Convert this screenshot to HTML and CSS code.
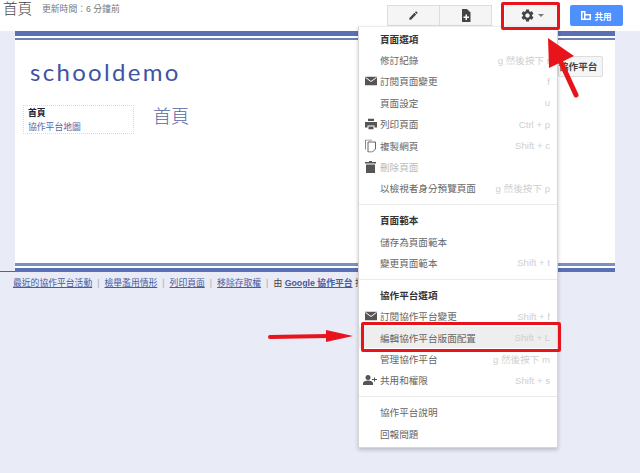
FILE: index.html
```html
<!DOCTYPE html>
<html lang="zh-Hant">
<head>
    <meta charset="UTF-8">
    <meta name="viewport" content="width=device-width, initial-scale=1.0">
    <title>首頁 - schooldemo</title>
    <link rel="stylesheet" href="styles.css">
</head>
<body>
    <!-- Barra superior -->
    <div class="topbar">
        <span class="page-title">首頁</span>
        <span class="updated">更新時間：6 分鐘前</span>
        <div class="tool-group">
            <div class="tool-btn">
                <svg width="11" height="11" viewBox="0 0 24 24"><path fill="#444" d="M3 17.25V21h3.75L17.81 9.94l-3.75-3.75L3 17.25zM20.71 7.04a1 1 0 0 0 0-1.41l-2.34-2.34a1 1 0 0 0-1.41 0l-1.83 1.83 3.75 3.75 1.83-1.83z"/></svg>
            </div>
            <div class="tool-btn">
                <svg width="12" height="13" viewBox="0 0 12 13"><path fill="#444" d="M2 0h5l3.5 3.5V13H2z"/><path fill="#fff" d="M5.5 5.5H7v2h2V9H7v2H5.5V9h-2V7.5h2z"/></svg>
            </div>
        </div>
        <div class="gear-btn">
            <svg width="15" height="15" viewBox="0 0 24 24"><path fill="#444" d="M19.14 12.94c.04-.3.06-.61.06-.94 0-.32-.02-.64-.07-.94l2.03-1.58c.18-.14.23-.41.12-.61l-1.92-3.32c-.12-.22-.37-.29-.59-.22l-2.39.96c-.5-.38-1.03-.7-1.62-.94l-.36-2.54c-.04-.24-.24-.41-.48-.41h-3.84c-.24 0-.43.17-.47.41l-.36 2.54c-.59.24-1.13.57-1.62.94l-2.39-.96c-.22-.08-.47 0-.59.22L2.74 8.87c-.12.21-.08.47.12.61l2.03 1.58c-.05.3-.09.63-.09.94s.02.64.07.94l-2.03 1.58c-.18.14-.23.41-.12.61l1.92 3.32c.12.22.37.29.59.22l2.39-.96c.5.38 1.03.7 1.62.94l.36 2.54c.05.24.24.41.48.41h3.84c.24 0 .44-.17.47-.41l.36-2.54c.59-.24 1.13-.56 1.62-.94l2.39.96c.22.08.47 0 .59-.22l1.92-3.32c.12-.22.07-.47-.12-.61l-2.01-1.58zM12 15.6c-1.98 0-3.6-1.62-3.6-3.6s1.62-3.6 3.6-3.6 3.6 1.62 3.6 3.6-1.62 3.6-3.6 3.6z"/></svg>
            <span class="caret"></span>
        </div>
        <div class="share-btn">
            <svg width="10" height="9" viewBox="0 0 10 9"><path fill="#fff" d="M0 0h4.5v3H10v6H0z"/><path fill="#4d90fe" d="M1.5 1.5H3v6H1.500zM4.500 4.500h4v3h-4z"/></svg>
            共用
        </div>
    </div>

    <!-- Pagina do site -->
    <div class="site">
        <div class="site-rule-top"></div>
        <div class="site-head">
            <div class="site-name">schooldemo</div>
            <div class="site-btn">協作平台</div>
        </div>
        <div class="site-body">
            <div class="side-nav">
                <div class="nav-current">首頁</div>
                <a class="nav-link" href="#">協作平台地圖</a>
            </div>
            <h1 class="content-title">首頁</h1>
        </div>
        <div class="site-rule-bottom"></div>
    </div>
    <div class="page-line"></div>

    <div class="footer">
        <a href="#">最近的協作平台活動</a><i>|</i><a href="#">檢舉濫用情形</a><i>|</i><a href="#">列印頁面</a><i>|</i><a href="#">移除存取權</a><i>|</i><span>由 <a class="strong" href="#">Google 協作平台</a> 技術提供</span>
    </div>

    <!-- Menu aberto -->
    <div class="menu">
        <div class="row head"><span>頁面選項</span></div>
        <div class="row"><span>修訂紀錄</span><kbd>g 然後按下 r</kbd></div>
        <div class="row">
            <svg class="icon" width="12" height="9" viewBox="0 0 12 9"><path fill="#555" d="M0 0h12v9H0z"/><path fill="none" stroke="#fff" stroke-width="1" d="M.5 1 6 5l5.5-4"/></svg>
            <span>訂閱頁面變更</span><kbd>f</kbd>
        </div>
        <div class="row"><span>頁面設定</span><kbd>u</kbd></div>
        <div class="row">
            <svg class="icon" width="12" height="11" viewBox="0 0 12 11"><path fill="#555" d="M3 0h6v2.5H3zM0 3.500h12V9H9.500V7h-7v2H0zM3.500 8h5v3h-5z"/></svg>
            <span>列印頁面</span><kbd>Ctrl + p</kbd>
        </div>
        <div class="row">
            <svg class="icon" width="11" height="13" viewBox="0 0 11 13"><path fill="none" stroke="#888" d="M.5 10V.5H7"/><path fill="none" stroke="#666" d="M3 2.5h7.500v7l-3 3H3z"/></svg>
            <span>複製網頁</span><kbd>Shift + c</kbd>
        </div>
        <div class="row disabled">
            <svg class="icon" width="11" height="12" viewBox="0 0 11 12"><path fill="#555" d="M4 0h3v1h4v1.500H0V1h4zM1 3.500h9V12H1z"/></svg>
            <span>刪除頁面</span>
        </div>
        <div class="row"><span>以檢視者身分預覽頁面</span><kbd>g 然後按下 p</kbd></div>
        <div class="sep"></div>
        <div class="row head"><span>頁面範本</span></div>
        <div class="row"><span>儲存為頁面範本</span></div>
        <div class="row"><span>變更頁面範本</span><kbd>Shift + t</kbd></div>
        <div class="sep"></div>
        <div class="row head"><span>協作平台選項</span></div>
        <div class="row">
            <svg class="icon" width="12" height="9" viewBox="0 0 12 9"><path fill="#555" d="M0 0h12v9H0z"/><path fill="none" stroke="#fff" stroke-width="1" d="M.5 1 6 5l5.5-4"/></svg>
            <span>訂閱協作平台變更</span><kbd>Shift + f</kbd>
        </div>
        <div class="row active"><span>編輯協作平台版面配置</span><kbd>Shift + L</kbd></div>
        <div class="row"><span>管理協作平台</span><kbd>g 然後按下 m</kbd></div>
        <div class="row">
            <svg class="icon wide" width="14" height="10" viewBox="0 0 14 10"><circle cx="5" cy="2.5" r="2.5" fill="#555"/><path fill="#555" d="M0 10V8c0-1.500 2.500-2.500 5-2.500S10 6.500 10 8v2z"/><path fill="#555" d="M11 2.500h1V4h2v1h-2v1.500h-1V5H9V4h2z"/></svg>
            <span>共用和權限</span><kbd>Shift + s</kbd>
        </div>
        <div class="sep"></div>
        <div class="row"><span>協作平台說明</span></div>
        <div class="row"><span>回報問題</span></div>
    </div>

    <!-- Marcacoes vermelhas por cima da captura -->
    <div class="mark mark-gear"></div>
    <div class="mark mark-row"></div>
    <svg class="arrows" width="640" height="473" viewBox="0 0 640 473">
        <path fill="none" stroke="#e8141c" stroke-width="5" stroke-linecap="round" d="M576 95 559 58"/>
        <path fill="#e8141c" d="M548 38 549 68 574 56z"/>
        <path fill="none" stroke="#e8141c" stroke-width="4" stroke-linecap="round" d="M270 337 328 336"/>
        <path fill="#e8141c" d="M326 330 353 336 326 342z"/>
    </svg>
</body>
</html>
```

FILE: styles.css
```css
* {
    margin: 0;
    padding: 0;
    box-sizing: border-box;
}

body {
    width: 640px;
    height: 473px;
    overflow: hidden;
    position: relative;
    background: #e9ebf6;
    font-family: "Liberation Sans", "Noto Sans CJK TC", sans-serif;
    color: #333;
}

/* top bar */
.topbar {
    height: 31px;
    background: #fff;
    display: flex;
    align-items: flex-start;
    padding-left: 3px;
}

.page-title {
    font-size: 14.5px;
    line-height: 18px;
    color: #444;
    font-weight: 300;
}

.updated {
    font-size: 8.8px;
    line-height: 19px;
    color: #777;
    margin-left: 10px;
}

.tool-group {
    display: flex;
    margin: 5px 0 0 auto;
}

.tool-btn {
    width: 53px;
    height: 21px;
    background: #f5f5f5;
    border: 1px solid #ddd;
    margin-left: -1px;
    display: flex;
    align-items: center;
    justify-content: center;
}

.gear-btn {
    width: 53px;
    height: 21px;
    margin: 5px 0 0 13px;
    background: #f5f5f5;
    display: flex;
    align-items: center;
    justify-content: center;
    gap: 3px;
}

.caret {
    border-top: 3px solid #777;
    border-left: 3px solid transparent;
    border-right: 3px solid transparent;
}

.share-btn {
    width: 53px;
    height: 21px;
    margin: 5px 17px 0 12px;
    background: #4d90fe;
    border-radius: 2px;
    color: #fff;
    font-size: 8.6px;
    font-weight: 700;
    display: flex;
    align-items: center;
    justify-content: center;
    gap: 3px;
}

/* site page */
.site {
    width: 600px;
    height: 241px;
    margin-left: 15px;
    background: #fff;
    display: flex;
    flex-direction: column;
}

.site-rule-top {
    height: 9px;
    border-top: 5px solid #5b6fb5;
    border-bottom: 2px solid #6f80b9;
}

.site-head {
    display: flex;
    justify-content: space-between;
    align-items: flex-start;
    padding: 16px 12px 0 15px;
}

.site-name {
    font-family: "Lato", sans-serif;
    font-size: 24px;
    line-height: 32px;
    letter-spacing: 2.3px;
    color: #3f54a4;
}

.site-btn {
    width: 45px;
    height: 21px;
    background: #f5f5f5;
    border: 1px solid #ddd;
    border-radius: 2px;
    font-size: 9.6px;
    font-weight: 700;
    line-height: 19px;
    text-align: right;
    padding-right: 6px;
    white-space: nowrap;
    color: #444;
}

.site-body {
    flex: 1;
    display: flex;
    align-items: flex-start;
    padding: 17px 0 0 8px;
}

.side-nav {
    width: 111px;
    height: 29px;
    border: 1px dotted #d8d8d8;
    padding: 0 4px;
    font-size: 8.8px;
    line-height: 14px;
}

.nav-current {
    font-weight: 700;
    color: #223;
}

.nav-link {
    color: #5366a8;
    text-decoration: none;
}

.content-title {
    font-family: "Liberation Serif", "Noto Sans CJK TC", serif;
    font-size: 18px;
    font-weight: 300;
    line-height: 24px;
    color: #5366a8;
    margin-left: 19px;
}

.site-rule-bottom {
    height: 9px;
    border-top: 3px solid #7f8ec0;
    border-bottom: 4px solid #5b6fb5;
}

.page-line {
    width: 15px;
    height: 1px;
    margin-top: -1px;
    background: #4a64a8;
}

/* footer */
.footer {
    padding: 5px 0 0 13px;
    font-size: 8.8px;
    line-height: 13px;
    color: #444;
    white-space: nowrap;
}

.footer a {
    color: #4a5c9c;
}

.footer i {
    font-style: normal;
    color: #aaa;
    margin: 0 5px;
}

.footer .strong {
    font-weight: 700;
}

/* dropdown menu */
.menu {
    position: absolute;
    left: 358px;
    top: 26px;
    width: 200px;
    height: 422px;
    padding-top: 1px;
    background: #fff;
    border: 1px solid #d6d6d6;
    border-top-color: #eee;
    box-shadow: 0 2px 4px rgba(0, 0, 0, 0.2);
    font-size: 9.6px;
    color: #666;
}

.row {
    height: 21.4px;
    padding: 0 7px 0 21px;
    display: flex;
    align-items: center;
    justify-content: space-between;
    position: relative;
    white-space: nowrap;
}

.row.head {
    font-weight: 700;
    color: #333;
}

.row.disabled span {
    color: #bbb;
}

.row.active {
    background: #eee;
}

.row kbd {
    font-family: inherit;
    font-size: 9.6px;
    color: #cfcfcf;
}

.icon {
    position: absolute;
    left: 6px;
    top: 50%;
    transform: translateY(-50%);
}

.icon.wide {
    left: 4px;
}

.sep {
    height: 1px;
    margin: 5px 0 4.4px;
    background: #ebebeb;
}

/* red marks */
.mark {
    position: absolute;
    border: 3px solid #e8141c;
    border-radius: 2px;
}

.mark-gear {
    left: 501px;
    top: 2px;
    width: 59px;
    height: 28px;
}

.mark-row {
    left: 361px;
    top: 322px;
    width: 200px;
    height: 30px;
}

.arrows {
    position: absolute;
    left: 0;
    top: 0;
}
```
